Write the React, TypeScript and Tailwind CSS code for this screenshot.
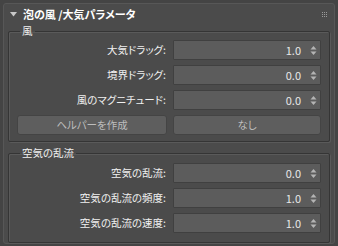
import { ReactNode } from 'react';

const font = { fontFamily: '"Noto Sans CJK JP", "Liberation Sans", sans-serif', fontFeatureSettings: '"palt"' };

const Spinner = () => (
	<svg width="7" height="11" viewBox="0 0 7 11" className="shrink-0">
		<path d="M3.5 1 L6.5 4.5 L0.5 4.5 Z" fill="#b4b4b4" />
		<path d="M3.5 10 L6.5 6.5 L0.5 6.5 Z" fill="#b4b4b4" />
	</svg>
);

const Row = ({ label, value }: { label: string; value: string }) => (
	<div className="flex items-center h-5">
		<div className="w-[150px] text-right text-[10.5px] text-[#f0f0f0] pr-px">{label}:</div>
		<div className="ml-[6px] flex-1 h-5 flex items-center justify-end gap-[9px] pr-[3px] bg-[#5c5c5c] border border-[#404040] rounded-[1px]">
			<span className="text-[11px] text-[#e8e8e8]">{value}</span>
			<Spinner />
		</div>
	</div>
);

const Group = ({ title, children, className }: { title: string; children: ReactNode; className?: string }) => (
	<fieldset className={`mx-1 border border-[#353535] rounded-[2px] shadow-[inset_1px_1px_0_#5a5a5a,1px_1px_0_#5a5a5a] px-2 ${className ?? ''}`}>
		<legend className="ml-[3px] px-[2px] text-[10.5px] leading-[12px] text-[#f0f0f0]">{title}</legend>
		{children}
	</fieldset>
);

export default function App() {
	return (
		<div className="w-[338px] h-[246px] bg-[#444444] p-[3px] overflow-hidden" style={font}>
			<div className="h-[241px] bg-[#4b4b4b] border border-[#575757] rounded-[3px]">
				<div className="flex items-center h-[20px] pl-[6px] pr-[6px]">
					<svg width="7" height="5" viewBox="0 0 7 5" className="mr-[6px]">
						<path d="M0 0 L7 0 L3.5 4.5 Z" fill="#c8c8c8" />
					</svg>
					<span className="text-[11px] font-bold text-white">泡の風 /大気パラメータ</span>
					<div className="ml-auto mr-px grid grid-cols-3 gap-[1px]">
						{Array.from({ length: 9 }).map((_, i) => (
							<div key={i} className="w-[1px] h-[1px] bg-[#9a9a9a]" />
						))}
					</div>
				</div>
				<Group title="風" className="mt-[1px] pt-[3px] pb-[6px]">
					<div className="flex flex-col gap-[5px]">
						<Row label="大気ドラッグ" value="1.0" />
						<Row label="境界ドラッグ" value="0.0" />
						<Row label="風のマグニチュード" value="0.0" />
						<div className="flex h-5">
							<button type="button" className="w-[150px] h-5 bg-[#5e5e5e] border border-[#444] rounded-[3px] text-[10.5px] text-[#bdbdbd]">ヘルパーを作成</button>
							<button type="button" className="ml-[6px] flex-1 h-5 bg-[#5e5e5e] border border-[#444] rounded-[3px] text-[10.5px] text-[#bdbdbd]">なし</button>
						</div>
					</div>
				</Group>
				<Group title="空気の乱流" className="mt-[5px] pt-[4px] pb-[9px]">
					<div className="flex flex-col gap-[5px]">
						<Row label="空気の乱流" value="0.0" />
						<Row label="空気の乱流の頻度" value="1.0" />
						<Row label="空気の乱流の速度" value="1.0" />
					</div>
				</Group>
			</div>
		</div>
	);
}
